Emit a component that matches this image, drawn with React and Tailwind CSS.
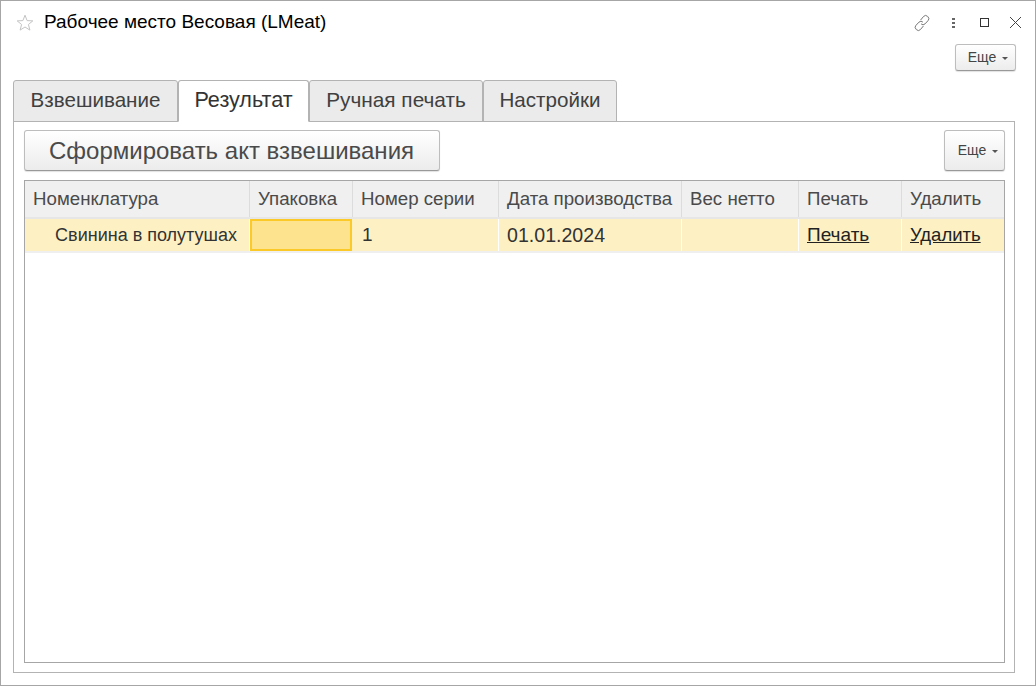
const font = { fontFamily: '"Liberation Sans", Arial, sans-serif' };

const tabs = [
  { label: "Взвешивание", width: "w-[165px]", text: "text-[20.6px]" },
  { label: "Результат", width: "w-[131px]", text: "text-[21.6px]", active: true },
  { label: "Ручная печать", width: "w-[174px]", text: "text-[20.8px]" },
  { label: "Настройки", width: "w-[134px]", text: "text-[20.6px]" },
];

const columns = [
  { label: "Номенклатура", width: "w-[225px]" },
  { label: "Упаковка", width: "w-[103px]" },
  { label: "Номер серии", width: "w-[146px]" },
  { label: "Дата производства", width: "w-[183px]" },
  { label: "Вес нетто", width: "w-[117px]" },
  { label: "Печать", width: "w-[103px]" },
  { label: "Удалить", width: "flex-1" },
];

const Arrow = () => (
  <span className="ml-[6px] mt-[2px] w-0 h-0 border-x-[3px] border-x-transparent border-t-[3px] border-t-[#555]" />
);

const StarIcon = () => (
  <svg width="18" height="18" viewBox="0 0 18 18" fill="none" stroke="#c4c4c4" strokeWidth="1">
    <path d="M9 1.2l2.1 5.4 5.7.3-4.4 3.6 1.5 5.6L9 13l-4.9 3.1 1.5-5.6L1.2 6.9l5.7-.3z" />
  </svg>
);

const LinkIcon = () => (
  <svg width="18" height="18" viewBox="0 0 18 18" fill="none" stroke="#777" strokeWidth="1">
    <path d="M7.6 6l3-3.6a2.8 2.8 0 0 1 4 0l.4.4a2.8 2.8 0 0 1 0 3.9l-3 3.2a2.8 2.8 0 0 1-3.9 0" />
    <path d="M10.4 12l-3 3.6a2.8 2.8 0 0 1-4 0l-.4-.4a2.8 2.8 0 0 1 0-3.9l3-3.2a2.8 2.8 0 0 1 3.9 0" />
  </svg>
);

const WindowButtons = () => (
  <div className="flex items-center">
    <LinkIcon />
    <div className="ml-[21px] flex flex-col gap-[2px]">
      <span className="w-[3px] h-[2px] bg-[#666]" />
      <span className="w-[3px] h-[2px] bg-[#666]" />
      <span className="w-[3px] h-[2px] bg-[#666]" />
    </div>
    <span className="ml-[25px] w-[9px] h-[9px] border border-[#333]" />
    <svg className="ml-[20px]" width="13" height="13" viewBox="0 0 13 13" stroke="#444" strokeWidth="1">
      <path d="M1 1l11 11M12 1L1 12" />
    </svg>
  </div>
);

const Tab = ({ label, width, text, active }) => (
  <div
    className={`${width} ${text} h-[42px] -mb-px pb-[2px] flex items-center justify-center border border-[#b3b3b3] rounded-t-[3px] ${
      active ? "bg-white border-b-white text-[#333] relative z-10" : "bg-[#ebebeb] text-[#404040]"
    }`}
  >
    {label}
  </div>
);

export default function App() {
  return (
    <div style={font} className="w-[1036px] h-[686px] bg-white border border-[#a6a6a6] flex flex-col overflow-hidden">
      {/* Title */}
      <div className="h-[43px] shrink-0 flex items-center pl-[15px] pr-[13px]">
        <StarIcon />
        <span className="ml-[10px] text-[19px] text-black">Рабочее место Весовая (LMeat)</span>
        <div className="ml-auto">
          <WindowButtons />
        </div>
      </div>

      {/* Top command bar */}
      <div className="h-[36px] shrink-0 flex justify-end items-start pr-[19px]">
        <button className="w-[61px] h-[27px] pl-[5px] flex items-center justify-center text-[14px] text-[#444] border border-[#bdbdbd] border-b-[#999] rounded-[3px] bg-gradient-to-b from-white to-[#ececec] shadow-[0_1px_1px_rgba(0,0,0,0.12)]">
          Еще
          <Arrow />
        </button>
      </div>

      {/* Tabs */}
      <div className="flex pl-[12px]">
        {tabs.map((t) => (
          <Tab key={t.label} {...t} />
        ))}
      </div>

      {/* Panel */}
      <div className="ml-[12px] mr-[20px] mb-[12px] flex-1 min-h-0 border border-[#b3b3b3] pl-[10px] pr-[9px] pt-[8px] pb-[9px] flex flex-col">
        <div className="flex justify-between h-[42px] shrink-0">
          <button className="w-[416px] h-[41px] pr-[1px] text-[24px] text-[#4a4a4a] border border-[#bdbdbd] border-b-[#999] rounded-[3px] bg-gradient-to-b from-white to-[#ececec] shadow-[0_1px_1px_rgba(0,0,0,0.12)]">
            Сформировать акт взвешивания
          </button>
          <button className="w-[61px] h-[41px] pl-[7px] flex items-center justify-center text-[14px] text-[#444] border border-[#bdbdbd] border-b-[#999] rounded-[3px] bg-gradient-to-b from-white to-[#ececec] shadow-[0_1px_1px_rgba(0,0,0,0.12)]">
            Еще
            <Arrow />
          </button>
        </div>

        {/* Table */}
        <div className="mt-[8px] flex-1 min-h-0 border border-[#a6a6a6]">
          <div className="flex h-[38px] bg-[#f0f0f0] border-b-2 border-b-[#e6e6e6]">
            {columns.map((c) => (
              <div
                key={c.label}
                className={`${c.width} flex items-center pl-[8px] text-[18.7px] text-[#4a4a4a] border-r border-r-[#dcdcdc] last:border-r-0`}
              >
                {c.label}
              </div>
            ))}
          </div>
          <div className="flex h-[34px] bg-[#fdf1c4] border-b-2 border-b-[#efefef] text-[19px] text-[#333]">
            <div className="w-[225px] flex items-center justify-end pr-[12px] border-r border-r-white text-[18px]">Свинина в полутушах</div>
            <div className="w-[102px] mr-[1px] bg-[#fee38f] border-2 border-[#fbc928]" />
            <div className="w-[146px] flex items-center pl-[9px] border-r border-r-white">1</div>
            <div className="w-[183px] flex items-center pl-[8px] pt-[1px] border-r border-r-white text-[19.6px]">01.01.2024</div>
            <div className="w-[117px] border-r border-r-white" />
            <div className="w-[103px] flex items-center pl-[8px] border-r border-r-white underline text-[#222]">Печать</div>
            <div className="flex-1 flex items-center pl-[8px] underline text-[#222] text-[18.5px]">Удалить</div>
          </div>
        </div>
      </div>
    </div>
  );
}
